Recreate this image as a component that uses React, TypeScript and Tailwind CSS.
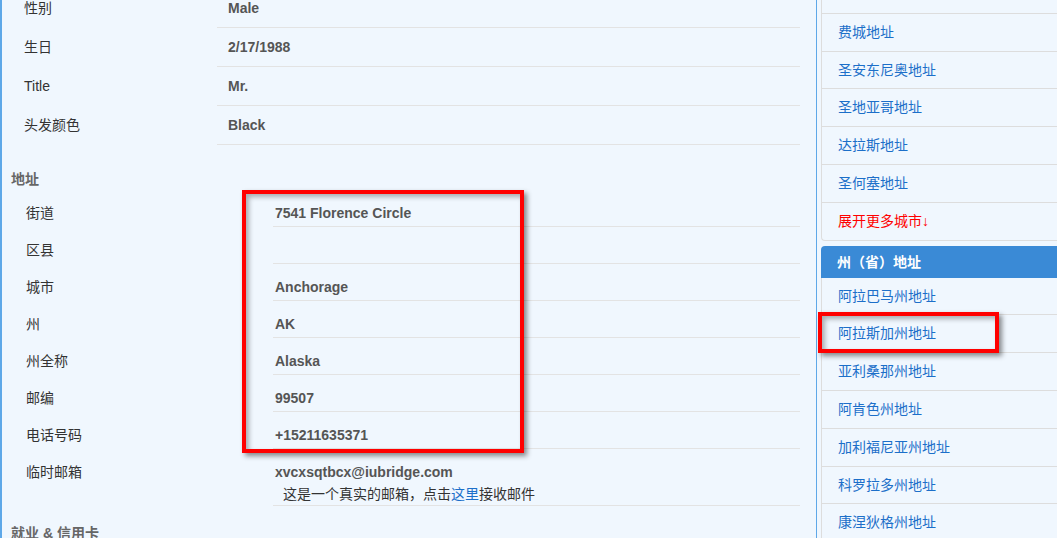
const basics = [
  { label: "性别", value: "Male" },
  { label: "生日", value: "2/17/1988" },
  { label: "Title", value: "Mr." },
  { label: "头发颜色", value: "Black" },
];

const address = [
  { label: "街道", value: "7541 Florence Circle" },
  { label: "区县", value: "" },
  { label: "城市", value: "Anchorage" },
  { label: "州", value: "AK" },
  { label: "州全称", value: "Alaska" },
  { label: "邮编", value: "99507" },
  { label: "电话号码", value: "+15211635371" },
];

const cities = ["", "费城地址", "圣安东尼奥地址", "圣地亚哥地址", "达拉斯地址", "圣何塞地址"];

const states = [
  "阿拉巴马州地址",
  "阿拉斯加州地址",
  "亚利桑那州地址",
  "阿肯色州地址",
  "加利福尼亚州地址",
  "科罗拉多州地址",
  "康涅狄格州地址",
];

function SectionTitle({ children, className }: { children: React.ReactNode; className: string }) {
  return (
    <div className={"pl-[9px] leading-[22px] text-[14px] font-bold text-[#666] " + className}>
      {children}
    </div>
  );
}

export default function App() {
  return (
    <div className="w-[1057px] h-[538px] overflow-hidden bg-[#f0f7fe] flex font-['Liberation_Sans','Noto_Sans_CJK_SC',sans-serif] text-[14px]">
      <main className="w-[817px] shrink-0 border-l-2 border-r border-[#5ea8e8]">
        <div className="-mt-[11px] grid grid-cols-[215px_583px]">
          {basics.map((r) => (
            <div key={r.label} className="contents">
              <div className="pl-[22px] py-[9px] leading-[20px] text-[#333]">{r.label}</div>
              <div className="pl-[11px] py-[9px] leading-[20px] font-bold text-[#555] border-b border-[#e3e3e3]">
                {r.value}
              </div>
            </div>
          ))}
        </div>

        <SectionTitle className="pt-[23px]">地址</SectionTitle>

        <div className="grid grid-cols-[271px_527px]">
          {address.map((r) => (
            <div key={r.label} className="contents">
              <div className="pl-[24px] pt-[12px] pb-[3px] leading-[22px] text-[#333]">{r.label}</div>
              <div className="pl-[2px] pt-[12px] pb-[2px] leading-[22px] h-[37px] font-bold text-[#555] border-b border-[#e3e3e3]">
                {r.value}
              </div>
            </div>
          ))}
          <div className="pl-[24px] pt-[12px] leading-[22px] text-[#333]">临时邮箱</div>
          <div className="pl-[2px] pt-[12px] leading-[22px] border-b border-[#e3e3e3]">
            <div className="font-bold text-[#555]">xvcxsqtbcx@iubridge.com</div>
            <div className="pl-[8px] text-[#333]">
              这是一个真实的邮箱，点击<a className="text-[#1c6fc9]">这里</a>接收邮件
            </div>
          </div>
        </div>

        <SectionTitle className="pt-[16px]">就业 &amp; 信用卡</SectionTitle>
      </main>

      <aside className="ml-[4px] w-[260px] shrink-0">
        <div className="-mt-[24px] border-l border-b border-[#dddddd] rounded-bl-[4px]">
          {cities.map((c, i) => (
            <div
              key={i}
              className="pl-[16px] py-[10px] leading-[16.8px] h-[37.8px] border-b border-[#dddddd] text-[#1c6fc9]"
            >
              {c}
            </div>
          ))}
          <div className="pl-[16px] py-[10px] leading-[16.8px] h-[36.8px] text-[#ff0000]">展开更多城市↓</div>
        </div>

        <div className="mt-[5px] bg-[#3a8ad6] rounded-tl-[4px] pl-[16px] py-[5px] leading-[22px] h-[32px] font-bold text-white">
          州（省）地址
        </div>
        <div className="border-l border-[#dddddd]">
          {states.map((s) => (
            <div
              key={s}
              className="pl-[16px] py-[10px] leading-[16.8px] h-[37.8px] border-b border-[#dddddd] text-[#1c6fc9]"
            >
              {s}
            </div>
          ))}
        </div>
      </aside>

      {/* annotation boxes */}
      <div className="absolute left-[242px] top-[190px] w-[282px] h-[263px] border-4 border-[#ff0000] shadow-[3px_3px_5px_rgba(0,0,0,0.45),inset_3px_3px_5px_rgba(0,0,0,0.3)] pointer-events-none" />
      <div className="absolute left-[818px] top-[312px] w-[181px] h-[41px] border-4 border-[#ff0000] shadow-[3px_3px_5px_rgba(0,0,0,0.45),inset_3px_3px_5px_rgba(0,0,0,0.3)] pointer-events-none" />
    </div>
  );
}
